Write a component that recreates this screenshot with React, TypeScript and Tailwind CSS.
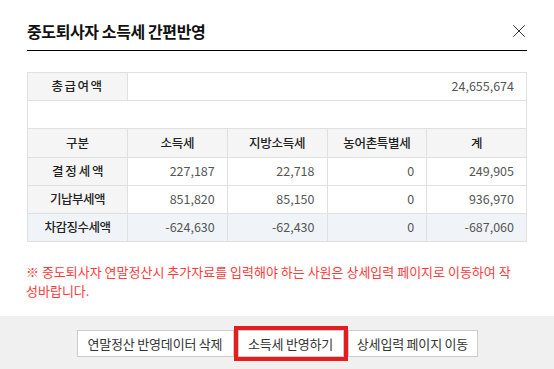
import { X } from 'lucide-react';

const rows = [
  { label: '결 정 세 액', values: ['227,187', '22,718', '0', '249,905'], tint: false },
  { label: '기납부세액', values: ['851,820', '85,150', '0', '936,970'], tint: false },
  { label: '차감징수세액', values: ['-624,630', '-62,430', '0', '-687,060'], tint: true },
];

const heads = ['소득세', '지방소득세', '농어촌특별세', '계'];

export default function App() {
  return (
    <div
      className="w-[554px] h-[369px] bg-white flex flex-col text-[#222]"
      style={{ fontFamily: '"Noto Sans CJK KR", "Noto Sans", sans-serif' }}
    >
      {/* 헤더 */}
      <div className="mx-[27px] pt-[19px] pb-[7px] border-b border-black flex items-center justify-between">
        <h1 className="text-[16px] leading-[24px] font-bold tracking-[-0.4px] text-[#111]">
          중도퇴사자 소득세 간편반영
        </h1>
        <button className="text-[#222] -mr-[3px]">
          <X size={22} strokeWidth={1} />
        </button>
      </div>

      {/* 세액 테이블 */}
      <table className="mx-[27px] mt-[21px] w-[500px] border-collapse table-fixed text-[12.5px]">
        <tbody>
          <tr className="h-[28px]">
            <th className="w-[100px] border border-[#e0e0e0] bg-[#f5f5f5] font-medium tracking-[1.5px]">
              총급여액
            </th>
            <td colSpan={4} className="border border-[#e0e0e0] text-right pr-[12px] text-[#555]">
              24,655,674
            </td>
          </tr>
          <tr className="h-[28px]">
            <td colSpan={5} className="border border-[#e0e0e0]"></td>
          </tr>
          <tr className="h-[29px] bg-[#f5f5f5]">
            <th className="border border-[#e0e0e0] font-medium">구분</th>
            {heads.map((h) => (
              <th key={h} className="w-[100px] border border-[#e0e0e0] font-medium tracking-[-0.3px]">
                {h}
              </th>
            ))}
          </tr>
          {rows.map((r) => (
            <tr key={r.label} className={`h-[28px] ${r.tint ? 'bg-[#f0f4f8]' : ''}`}>
              <th
                className={`border border-[#e0e0e0] font-medium tracking-[-0.5px] ${
                  r.tint ? 'bg-[#f0f4f8]' : 'bg-[#f5f5f5]'
                }`}
              >
                {r.label}
              </th>
              {r.values.map((v, i) => (
                <td key={i} className="border border-[#e0e0e0] text-right pr-[12px] text-[#555]">
                  {v}
                </td>
              ))}
            </tr>
          ))}
        </tbody>
      </table>

      {/* 안내 문구 */}
      <p className="mx-[26px] mt-[20px] text-[13px] leading-[19px] text-[#ff3b3b]">
        ※ 중도퇴사자 연말정산시 추가자료를 입력해야 하는 사원은 상세입력 페이지로 이동하여 작
        <br />
        성바랍니다.
      </p>

      {/* 하단 버튼 */}
      <div className="mt-auto h-[53px] bg-[#f0f0f0] flex justify-center items-start pt-[14px]">
        <button className="w-[157px] h-[27px] bg-white border border-[#ccc] text-[13px] tracking-[-0.2px] text-[#333]">
          연말정산 반영데이터 삭제
        </button>
        <button className="mx-[4px] w-[106px] h-[27px] bg-white border border-[#ccc] outline-4 outline-[#e41e1e] text-[13px] tracking-[-0.2px] text-[#333]">
          소득세 반영하기
        </button>
        <button className="w-[130px] h-[27px] bg-white border border-[#ccc] text-[13px] tracking-[-0.2px] text-[#333]">
          상세입력 페이지 이동
        </button>
      </div>
    </div>
  );
}
